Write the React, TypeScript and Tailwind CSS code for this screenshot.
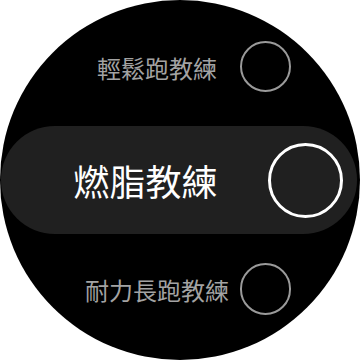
import React from "react";

const font = { fontFamily: '"Noto Sans CJK TC", "Noto Sans", sans-serif' };

export default function App() {
  return (
    <div className="w-[360px] h-[360px] bg-white" style={font}>
      <div className="w-[360px] h-[360px] rounded-full bg-black overflow-hidden flex flex-col pt-[41px]">
        <div className="ml-[74px] w-[217px] h-[51px] flex items-center">
          <div className="flex-1 text-center text-[24px] leading-none text-[#a3a3a3] pt-[3px]">輕鬆跑教練</div>
          <div className="w-[51px] h-[51px] rounded-full border-2 border-[#9a9a9a]" />
        </div>
        <div className="mt-[34px] mx-[1px] w-[356px] h-[108px] rounded-full bg-[#202020] flex items-center pl-[22px] pr-[14px]">
          <div className="flex-1 text-center text-[36px] leading-none text-white">燃脂教練</div>
          <div className="w-[75px] h-[75px] rounded-full border-[3px] border-white" />
        </div>
        <div className="mt-[29px] ml-[74px] w-[217px] h-[52px] flex items-center">
          <div className="flex-1 text-center text-[24px] leading-none text-[#a3a3a3] pt-[1px]">耐力長跑教練</div>
          <div className="w-[51px] h-[52px] rounded-full border-2 border-[#9a9a9a]" />
        </div>
      </div>
    </div>
  );
}
